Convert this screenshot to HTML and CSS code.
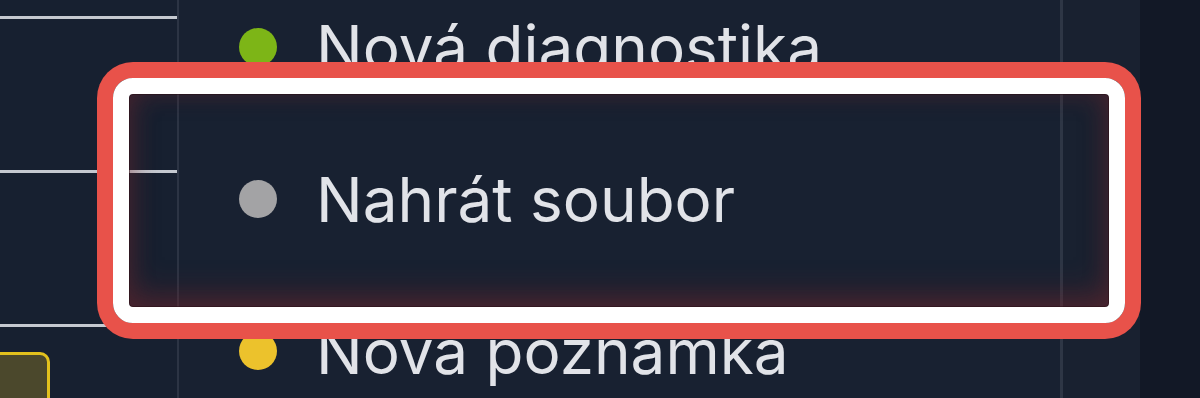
FILE: index.html
```html
<!DOCTYPE html>
<html lang="cs">
<head>
  <meta charset="UTF-8" />
  <meta name="viewport" content="width=device-width, initial-scale=1.0"/>
  <title>Nabídka – Nahrát soubor</title>
  <link rel="stylesheet" href="styles.css">
</head>
<body>
  <div class="app">
    <div class="sidebar">
      <div class="row first"></div>
      <div class="row"></div>
      <div class="row"></div>
      <div class="row last">
        <div class="tag"></div>
      </div>
    </div>

    <div class="menu">
      <ul class="menu-list">
        <li class="menu-item"><span class="dot green"></span><span class="label">Nová diagnostika</span></li>
        <li class="menu-item"><span class="dot gray"></span><span class="label">Nahrát soubor</span></li>
        <li class="menu-item"><span class="dot yellow"></span><span class="label">Nová poznámka</span></li>
      </ul>
    </div>

    <div class="rail"></div>
    <div class="backdrop"></div>
  </div>

  <!-- annotation drawn over the selected item -->
  <div class="highlight"></div>
</body>
</html>
```

FILE: styles.css
```css
* { margin: 0; padding: 0; box-sizing: border-box; }
html, body { width: 100%; height: 100%; }
body {
  overflow: hidden;
  background: #171f2e;
  font-family: Inter, "Noto Sans", sans-serif;
  position: relative;
}

.app {
  display: flex;
  height: 398px;
  overflow: hidden;
}

/* left column */
.sidebar {
  width: 179px;
  flex-shrink: 0;
  border-right: 2px solid #2c3444;
  background: #172030;
  display: flex;
  flex-direction: column;
  overflow: hidden;
}

.sidebar .row {
  height: 154px;
  flex-shrink: 0;
  border-bottom: 3px solid #c5c9d0;
}

.sidebar .row.first {
  height: 19px;
}

.sidebar .row.last {
  border-bottom: none;
  padding-top: 25px;
}

.tag {
  width: 82px;
  height: 80px;
  margin-left: -32px;
  border: 3px solid #e2c11d;
  border-radius: 10px;
  background: #4b482c;
}

/* dropdown */
.menu {
  width: 881px;
  flex-shrink: 0;
  background: #182131;
  overflow: hidden;
}

.menu-list {
  list-style: none;
  margin-top: -29px;
}

.menu-item {
  height: 152px;
  display: flex;
  align-items: center;
  gap: 39px;
  padding-left: 60px;
}

.dot {
  width: 38px;
  height: 38px;
  border-radius: 50%;
  flex-shrink: 0;
}

.dot.green { background: #7db517; }
.dot.gray { background: #a3a3a5; }
.dot.yellow { background: #ecc22c; }

.label {
  font-size: 62px;
  font-weight: 400;
  color: #e1e3e8;
  line-height: 1;
  white-space: nowrap;
  padding-top: 2px;
}

.rail {
  width: 80px;
  flex-shrink: 0;
  border-left: 3px solid #2e3645;
  background: #192130;
}

.backdrop {
  flex: 1;
  background: #121826;
}

/* red/white annotation frame */
.highlight {
  position: absolute;
  left: 113px;
  top: 78px;
  width: 1012px;
  height: 245px;
  border: 16px solid #ffffff;
  border-radius: 20px;
  box-shadow:
    0 0 0 16px #e8524a,
    inset 0 0 0 1px rgba(40, 12, 18, 0.5),
    inset 0 -14px 30px rgba(120, 40, 45, 0.4),
    inset 0 0 26px rgba(120, 40, 45, 0.3);
}
```
